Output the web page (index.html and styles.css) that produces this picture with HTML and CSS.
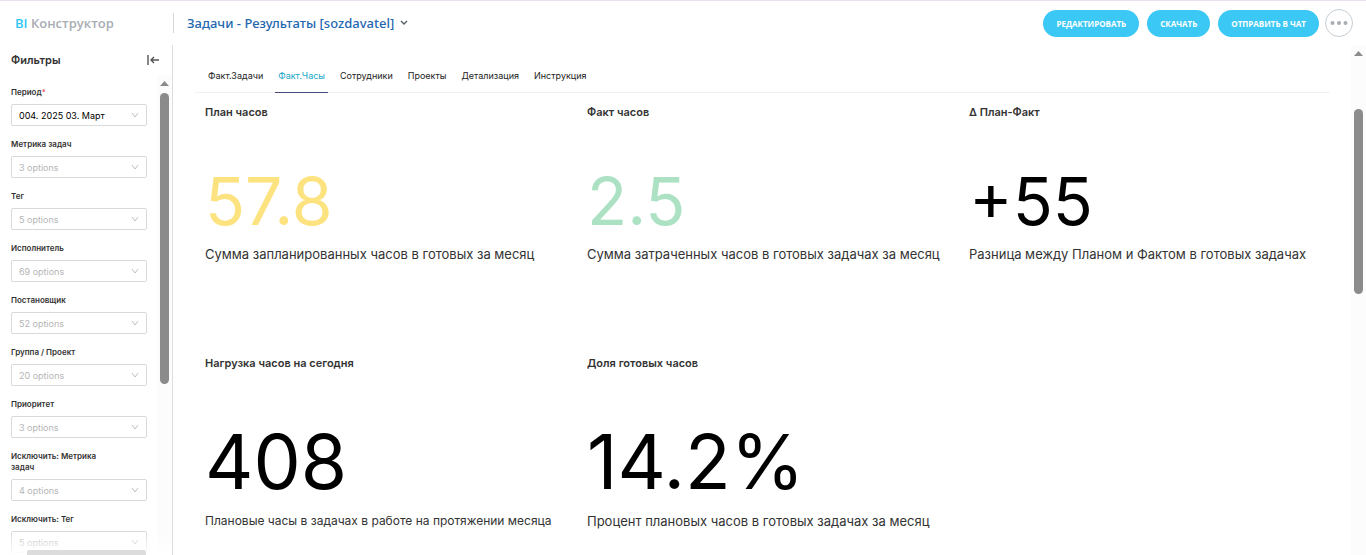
FILE: index.html
```html
<!DOCTYPE html>
<html lang="ru">

<head>
    <meta charset="UTF-8">
    <meta name="viewport" content="width=device-width, initial-scale=1.0">
    <title>BI Конструктор</title>
    <link rel="stylesheet" href="styles.css">
</head>

<body>

    <header class="header">
        <div class="logo"><span>BI</span> Конструктор</div>
        <button class="dashboard-name">
            Задачи - Результаты [sozdavatel]
            <svg width="8" height="6" viewBox="0 0 8 6"><path d="M1 1l3 3 3-3" fill="none" stroke="#535c69" stroke-width="1.4"/></svg>
        </button>
        <div class="actions">
            <button class="btn">РЕДАКТИРОВАТЬ</button>
            <button class="btn">СКАЧАТЬ</button>
            <button class="btn">ОТПРАВИТЬ В ЧАТ</button>
            <button class="more" aria-label="Ещё">
                <svg width="18" height="4" viewBox="0 0 18 4" fill="#a8adb4"><circle cx="2.5" cy="2" r="2"/><circle cx="9" cy="2" r="2"/><circle cx="15.5" cy="2" r="2"/></svg>
            </button>
        </div>
    </header>

    <div class="container">
        <aside class="sidebar">
            <div class="sidebar-head">
                <h2>Фильтры</h2>
                <button class="collapse" aria-label="Свернуть">
                    <svg width="12" height="10" viewBox="0 0 12 10" fill="none" stroke="#555" stroke-width="1.4"><path d="M1 0v10M12 5H4M7 2L4 5l3 3"/></svg>
                </button>
            </div>
            <div class="sidebar-body">
                <form class="filters">
                    <div class="filter">
                        <label for="period">Период<span class="required">*</span></label>
                        <div class="select-box">
                            <select id="period" class="filled"><option>004. 2025 03. Март</option></select>
                            <svg class="arrow" viewBox="0 0 8 6"><path d="M1 1l3 4 3-4"/></svg>
                        </div>
                    </div>
                    <div class="filter">
                        <label for="metric">Метрика задач</label>
                        <div class="select-box">
                            <select id="metric"><option>3 options</option></select>
                            <svg class="arrow" viewBox="0 0 8 6"><path d="M1 1l3 4 3-4"/></svg>
                        </div>
                    </div>
                    <div class="filter">
                        <label for="tag">Тег</label>
                        <div class="select-box">
                            <select id="tag"><option>5 options</option></select>
                            <svg class="arrow" viewBox="0 0 8 6"><path d="M1 1l3 4 3-4"/></svg>
                        </div>
                    </div>
                    <div class="filter">
                        <label for="executor">Исполнитель</label>
                        <div class="select-box">
                            <select id="executor"><option>69 options</option></select>
                            <svg class="arrow" viewBox="0 0 8 6"><path d="M1 1l3 4 3-4"/></svg>
                        </div>
                    </div>
                    <div class="filter">
                        <label for="author">Постановщик</label>
                        <div class="select-box">
                            <select id="author"><option>52 options</option></select>
                            <svg class="arrow" viewBox="0 0 8 6"><path d="M1 1l3 4 3-4"/></svg>
                        </div>
                    </div>
                    <div class="filter">
                        <label for="group">Группа / Проект</label>
                        <div class="select-box">
                            <select id="group"><option>20 options</option></select>
                            <svg class="arrow" viewBox="0 0 8 6"><path d="M1 1l3 4 3-4"/></svg>
                        </div>
                    </div>
                    <div class="filter">
                        <label for="priority">Приоритет</label>
                        <div class="select-box">
                            <select id="priority"><option>3 options</option></select>
                            <svg class="arrow" viewBox="0 0 8 6"><path d="M1 1l3 4 3-4"/></svg>
                        </div>
                    </div>
                    <div class="filter">
                        <label for="notMetric">Исключить: Метрика задач</label>
                        <div class="select-box">
                            <select id="notMetric"><option>4 options</option></select>
                            <svg class="arrow" viewBox="0 0 8 6"><path d="M1 1l3 4 3-4"/></svg>
                        </div>
                    </div>
                    <div class="filter">
                        <label for="notTag">Исключить: Тег</label>
                        <div class="select-box">
                            <select id="notTag"><option>5 options</option></select>
                            <svg class="arrow" viewBox="0 0 8 6"><path d="M1 1l3 4 3-4"/></svg>
                        </div>
                    </div>
                </form>
                <div class="scrollbar">
                    <svg width="9" height="5" viewBox="0 0 9 5"><path d="M0 5L4.500 0 9 5z" fill="#8b8b8b"/></svg>
                    <div class="thumb thumb-filters"></div>
                </div>
            </div>
            <div class="sidebar-footer"><div class="apply"></div></div>
        </aside>

        <main class="content">
            <nav class="tabs">
                <a href="#">Факт.Задачи</a>
                <a href="#" class="active">Факт.Часы</a>
                <a href="#">Сотрудники</a>
                <a href="#">Проекты</a>
                <a href="#">Детализация</a>
                <a href="#">Инструкция</a>
            </nav>
            <div class="cards">
                <section class="card">
                    <h3>План часов</h3>
                    <div class="value yellow">57.8</div>
                    <p>Сумма запланированных часов в готовых за месяц</p>
                </section>
                <section class="card">
                    <h3>Факт часов</h3>
                    <div class="value green">2.5</div>
                    <p>Сумма затраченных часов в готовых задачах за месяц</p>
                </section>
                <section class="card">
                    <h3>Δ План-Факт</h3>
                    <div class="value">+55</div>
                    <p>Разница между Планом и Фактом в готовых задачах</p>
                </section>
                <section class="card large">
                    <h3>Нагрузка часов на сегодня</h3>
                    <div class="value">408</div>
                    <p class="small">Плановые часы в задачах в работе на протяжении месяца</p>
                </section>
                <section class="card large">
                    <h3>Доля готовых часов</h3>
                    <div class="value">14.2%</div>
                    <p>Процент плановых часов в готовых задачах за месяц</p>
                </section>
            </div>
        </main>
        <div class="scrollbar page-scrollbar">
            <svg width="9" height="5" viewBox="0 0 9 5"><path d="M0 5L4.500 0 9 5z" fill="#8b8b8b"/></svg>
            <div class="thumb thumb-page"></div>
        </div>
    </div>

</body>

</html>
```
FILE: styles.css
```css
* {
    box-sizing: border-box;
}

body {
    margin: 0;
    height: 100vh;
    display: flex;
    flex-direction: column;
    overflow: hidden;
    background-color: #fff;
    border-top: 1px solid #eadfec;
    font-family: Inter, "Liberation Sans", sans-serif;
    color: #333;
}

button {
    font-family: inherit;
    border: none;
    background: none;
    padding: 0;
    cursor: pointer;
}

h2, h3, p {
    margin: 0;
}

.header {
    display: flex;
    align-items: center;
    height: 44px;
    flex-shrink: 0;
    padding: 0 13px 0 15px;
    font-family: "Open Sans", "Noto Sans", sans-serif;
}

.logo {
    width: 158px;
    font-size: 13px;
    font-weight: 600;
    color: #a8adb4;
}

.logo span {
    color: #2fc6f6;
}

.dashboard-name {
    display: flex;
    align-items: center;
    gap: 6px;
    height: 20px;
    padding-left: 13px;
    border-left: 1px solid #d5d7da;
    font-family: "Noto Sans", sans-serif;
    font-size: 13px;
    font-weight: 500;
    color: #1f67b0;
}

.actions {
    display: flex;
    align-items: center;
    gap: 8px;
    margin-left: auto;
}

.btn {
    height: 27px;
    padding: 0 13px;
    border-radius: 14px;
    background-color: #3bc8f5;
    color: #fff;
    font-size: 8px;
    font-weight: 700;
}

.more {
    display: flex;
    align-items: center;
    justify-content: center;
    width: 28px;
    height: 28px;
    margin-left: -2px;
    border: 1px solid #c6cdd3;
    border-radius: 50%;
}

.container {
    display: flex;
    flex: 1;
    min-height: 0;
}

.sidebar {
    position: relative;
    display: flex;
    flex-direction: column;
    width: 173px;
    flex-shrink: 0;
    border-right: 1px solid #dedede;
}

.sidebar-head {
    display: flex;
    align-items: center;
    justify-content: space-between;
    height: 30px;
    padding: 0 13px 0 11px;
    flex-shrink: 0;
}

.sidebar-head h2 {
    font-size: 11px;
    font-weight: 600;
}

.collapse {
    display: flex;
}

.sidebar-body {
    display: flex;
    justify-content: space-between;
    flex: 1;
    min-height: 0;
}

.filters {
    width: 147px;
    padding: 12px 0 0 11px;
    overflow: hidden;
}

.filter {
    margin-bottom: 13px;
}

.filter:last-child {
    margin-bottom: 0;
}

.filter label {
    display: block;
    width: 110px;
    margin-bottom: 6px;
    font-size: 8px;
    font-weight: 600;
    line-height: 11px;
}

.required {
    color: #e04355;
    font-weight: 400;
}

.select-box {
    display: grid;
    align-items: center;
}

.select-box select {
    grid-area: 1 / 1;
    width: 100%;
    height: 22px;
    padding: 0 7px;
    appearance: none;
    border: 1px solid #d9d9d9;
    border-radius: 2px;
    background-color: #fff;
    font-family: inherit;
    font-size: 9px;
    color: #b5b5b5;
}

.select-box select.filled {
    color: #000;
}

.arrow {
    grid-area: 1 / 1;
    justify-self: end;
    width: 8px;
    height: 6px;
    margin-right: 8px;
    fill: none;
    stroke: #bfbfbf;
    pointer-events: none;
}

.scrollbar {
    display: flex;
    flex-direction: column;
    align-items: center;
    gap: 7px;
    width: 15px;
    padding-top: 6px;
    background-color: #fcfcfc;
}

.page-scrollbar {
    flex-shrink: 0;
}

.thumb {
    width: 9px;
    border-radius: 5px;
    background-color: #8b8b8b;
}

.thumb-filters {
    height: 291px;
}

.thumb-page {
    height: 185px;
    margin-top: 46px;
}

/* fade over the list, with the edge of the apply button under it */
.sidebar-footer {
    position: absolute;
    left: 0;
    right: 0;
    bottom: 0;
    height: 24px;
    display: flex;
    align-items: flex-end;
    padding: 0 26px 0 27px;
    background: linear-gradient(rgba(255, 255, 255, 0), #fff);
}

.apply {
    flex: 1;
    height: 5px;
    border-radius: 2px 2px 0 0;
    background-color: #dcdcdc;
}

.content {
    flex: 1;
    min-width: 0;
    padding-top: 15px;
}

.tabs {
    display: flex;
    gap: 9px;
    margin: 0 21px 0 22px;
    padding-left: 10px;
    border-bottom: 1px solid #f0f0f0;
}

.tabs a {
    height: 33px;
    margin-bottom: -1px;
    padding: 0 3px;
    border-bottom: 1px solid transparent;
    line-height: 32px;
    font-size: 9px;
    color: #222;
    text-decoration: none;
}

.tabs a.active {
    color: #20a7c9;
    border-bottom-color: #45487a;
}

.cards {
    display: grid;
    grid-template-columns: repeat(3, 1fr);
    grid-template-rows: 251px auto;
    padding: 12px 0 0 32px;
}

.card h3 {
    font-size: 11px;
    font-weight: 600;
    line-height: 14px;
}

.value {
    margin-top: 42px;
    font-size: 66px;
    line-height: 80px;
    color: #000;
}

.value.yellow {
    color: #fde380;
}

.value.green {
    color: #ace1c4;
}

.card p {
    margin-top: 4px;
    font-size: 13px;
    line-height: 18px;
}

.card.large .value {
    margin-top: 52px;
    font-size: 75px;
}

.card.large p {
    margin-top: 10px;
}

.card p.small {
    font-size: 12px;
}
```
